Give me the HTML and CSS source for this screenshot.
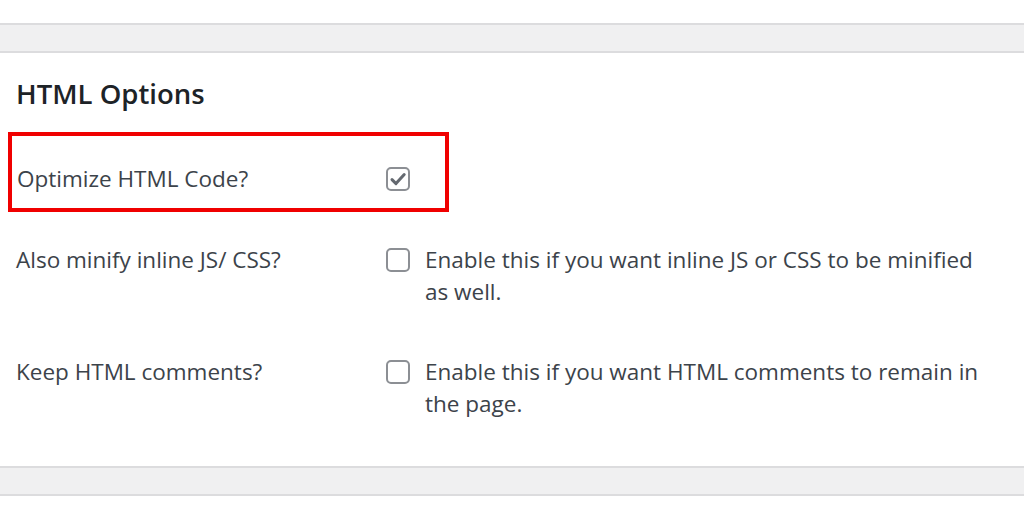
FILE: index.html
```html
<!DOCTYPE html>
<html lang="en">
<head>
  <meta charset="UTF-8">
  <title>HTML Options</title>
  <link rel="stylesheet" href="styles.css">
</head>
<body>
  <div class="band"></div>

  <div class="panel">
    <h2>HTML Options</h2>

    <div class="highlight">
      <div class="row">
        <div class="label">Optimize HTML Code?</div>
        <div class="field">
          <span class="check checked">
            <svg viewBox="0 0 24 24" width="24" height="24"><path d="M6 12.6l4 4L18.2 7.6" fill="none" stroke="#646970" stroke-width="3" stroke-linecap="round" stroke-linejoin="round"/></svg>
          </span>
        </div>
      </div>
    </div>

    <div class="row spaced">
      <div class="label">Also minify inline JS/ CSS?</div>
      <div class="field">
        <span class="check"></span>
        <span class="desc">Enable this if you want inline JS or CSS to be minified as well.</span>
      </div>
    </div>

    <div class="row spaced">
      <div class="label">Keep HTML comments?</div>
      <div class="field">
        <span class="check"></span>
        <span class="desc">Enable this if you want HTML comments to remain in the page.</span>
      </div>
    </div>
  </div>

  <div class="band"></div>
</body>
</html>
```

FILE: styles.css
```css
body {
  margin: 0;
  padding-top: 23px;
  background: #fff;
  font-family: "Open Sans", sans-serif;
  font-size: 22.5px;
  color: #3c434a;
}

.band {
  height: 26px;
  background: #f0f0f1;
  border-top: 2px solid #dcdcde;
  border-bottom: 2px solid #dcdcde;
}

.panel {
  padding: 25px 16px 46px;
}

.panel h2 {
  margin: 0 0 22px;
  font-size: 27.5px;
  line-height: 32px;
  font-weight: 600;
  color: #1d2327;
}

.highlight {
  width: 441px;
  margin-left: -8px;
  padding: 27px 0 13px 5px;
  border: 4px solid #f00000;
  box-sizing: border-box;
}

.row {
  display: flex;
  line-height: 32px;
}

.row.spaced {
  margin-top: 32px;
}

.row.spaced + .row.spaced {
  margin-top: 48px;
}

.label {
  width: 370px;
  flex-shrink: 0;
}

.highlight .label {
  width: 369px;
}

.field {
  display: flex;
  align-items: flex-start;
  gap: 15px;
  width: 600px;
}

.check {
  flex-shrink: 0;
  width: 24px;
  height: 24px;
  margin-top: 4px;
  box-sizing: border-box;
  border: 2px solid #8c8f94;
  border-radius: 5px;
  background: #fff;
  position: relative;
}

.check svg {
  position: absolute;
  top: -2px;
  left: -2px;
}

.desc {
  width: 558px;
}
```
